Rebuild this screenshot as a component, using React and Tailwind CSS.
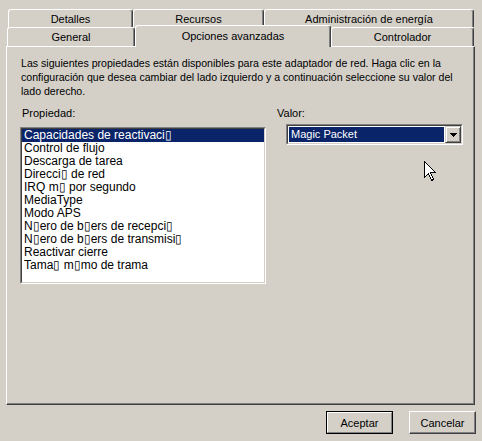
import React from "react";

const BOX = "\u25AF";

const properties = [
  `Capacidades de reactivaci${BOX}`,
  "Control de flujo",
  "Descarga de tarea",
  `Direcci${BOX} de red`,
  `IRQ m${BOX} por segundo`,
  "MediaType",
  "Modo APS",
  `N${BOX}ero de b${BOX}ers de recepci${BOX}`,
  `N${BOX}ero de b${BOX}ers de transmisi${BOX}`,
  "Reactivar cierre",
  `Tama${BOX} m${BOX}mo de trama`,
];

function Tab({ label, width, selected }) {
  return (
    <div
      className={
        "flex items-center justify-center border-t border-l border-r border-t-white border-l-white border-r-[#404040] rounded-t-[3px] shadow-[inset_-1px_0_#808080] bg-[#d4d0c8] " +
        (selected ? "h-[22px] -mb-[1px] relative z-10 pb-[2px]" : "h-full")
      }
      style={{ width }}
    >
      {label}
    </div>
  );
}

function Button({ label, isDefault }) {
  if (isDefault) {
    return (
      <div className="w-[67px] h-[23px] border border-black">
        <div className="w-full h-full flex items-center justify-center border-t border-l border-r border-b border-t-white border-l-white border-r-[#808080] border-b-[#808080]">
          {label}
        </div>
      </div>
    );
  }
  return (
    <div className="w-[67px] h-[23px] flex items-center justify-center border-t border-l border-r border-b border-t-white border-l-white border-r-[#404040] border-b-[#404040] shadow-[inset_-1px_-1px_#808080]">
      {label}
    </div>
  );
}

export default function App() {
  return (
    <div className="relative w-[482px] h-[441px] overflow-hidden bg-[#d4d0c8] text-[11px] leading-[14px] text-black font-['Liberation_Sans',Arial,sans-serif]">
      {/* tab strip */}
      <div className="pt-[9px]">
        <div className="flex h-[18px] pl-[8px]">
          <Tab label="Detalles" width={125} />
          <Tab label="Recursos" width={131} />
          <Tab label="Administración de energía" width={210} />
        </div>
        <div className="flex items-end h-[19px] pl-[7px]">
          <Tab label="General" width={128} />
          <Tab label="Opciones avanzadas" width={196} selected />
          <Tab label="Controlador" width={143} />
        </div>
      </div>

      {/* page */}
      <div className="ml-[6px] w-[469px] h-[359px] border-t border-l border-r border-b border-t-white border-l-white border-r-[#404040] border-b-[#404040] shadow-[inset_-1px_-1px_#808080] pl-[13px] pt-[9px]">
        <p className="pl-[1px] whitespace-nowrap text-[10.6px]">
          Las siguientes propiedades están disponibles para este adaptador de red. Haga clic en la
          <br />
          configuración que desea cambiar del lado izquierdo y a continuación seleccione su valor del
          <br />
          lado derecho.
        </p>

        <div className="flex items-start mt-[8px]">
          <div className="w-[246px]">
            <div className="pl-[2px]">Propiedad:</div>
            <div className="mt-[7px] h-[157px] border-t border-l border-r border-b border-t-[#808080] border-l-[#808080] border-r-white border-b-white">
              <div className="h-full bg-white border-t border-l border-r border-b border-t-[#404040] border-l-[#404040] border-r-[#d4d0c8] border-b-[#d4d0c8] text-[12px] leading-[13px]">
                {properties.map((p, i) => (
                  <div
                    key={p}
                    className={
                      "h-[13px] pl-[2px] whitespace-nowrap " +
                      (i === 0 ? "bg-[#0a246a] text-white" : "")
                    }
                  >
                    {p}
                  </div>
                ))}
              </div>
            </div>
          </div>

          <div className="ml-[11px]">
            <div>Valor:</div>
            <div className="ml-[9px] mt-[4px] w-[177px] h-[21px] border-t border-l border-r border-b border-t-[#808080] border-l-[#808080] border-r-white border-b-white">
              <div className="h-full flex bg-white border-t border-l border-r border-b border-t-[#404040] border-l-[#404040] border-r-[#d4d0c8] border-b-[#d4d0c8] p-[1px]">
                <div className="flex-1 bg-[#0a246a] text-white pl-[2px] leading-[15px] text-[11px]">
                  Magic Packet
                </div>
                <div className="w-[16px] h-[17px] -my-[1px] -mr-[1px] ml-[1px] flex items-center justify-center bg-[#d4d0c8] border-t border-l border-r border-b border-t-[#d4d0c8] border-l-[#d4d0c8] border-r-[#404040] border-b-[#404040] shadow-[inset_1px_1px_white,inset_-1px_-1px_#808080]">
                  <svg width="7" height="4" viewBox="0 0 7 4" shapeRendering="crispEdges">
                    <path d="M0 0h7v1H0zM1 1h5v1H1zM2 2h3v1H2zM3 3h1v1H3z" fill="#000" />
                  </svg>
                </div>
              </div>
            </div>
          </div>
        </div>
      </div>

      {/* buttons */}
      <div className="flex justify-end gap-[16px] pr-[6px] mt-[6px]">
        <Button label="Aceptar" isDefault />
        <Button label="Cancelar" />
      </div>

      {/* mouse pointer */}
      <svg
        className="absolute left-[424px] top-[161px]"
        width="12"
        height="20"
        viewBox="0 0 12 20"
        shapeRendering="crispEdges"
      >
        <path
          d="M0.5 0.5 L0.5 16.5 L4.5 12.5 L7.5 19.5 L9.5 18.5 L6.5 11.5 L11.5 11.5 Z"
          fill="#fff"
          stroke="#000"
          strokeWidth="1"
        />
      </svg>
    </div>
  );
}
